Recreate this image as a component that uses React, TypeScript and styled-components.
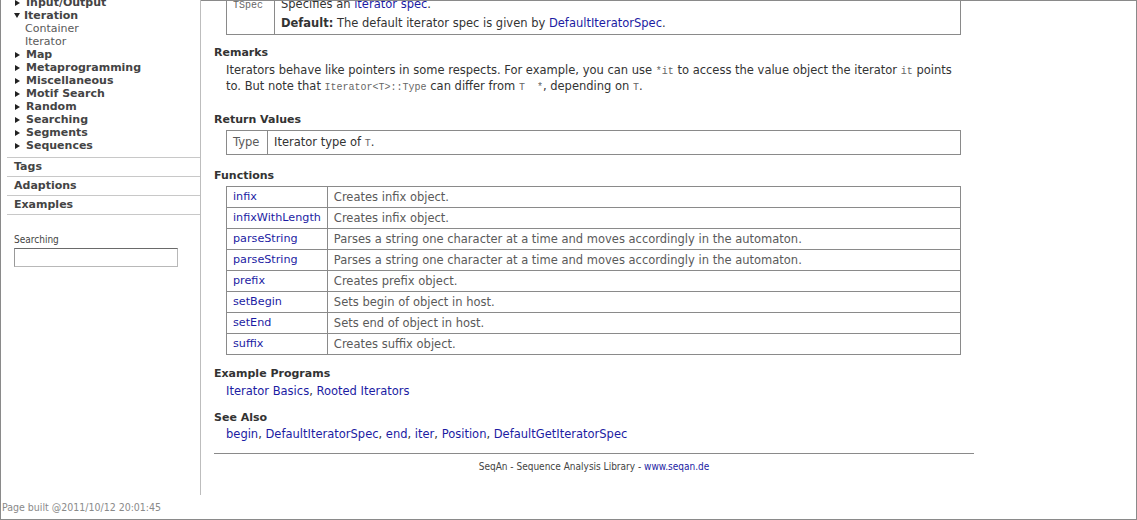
import React from "react";
import styled, { createGlobalStyle } from "styled-components";

const GlobalStyle = createGlobalStyle`
  html, body {
    margin: 0;
    padding: 0;
    background: #fff;
    overflow: hidden;
  }
  body {
    font-family: "DejaVu Sans", Verdana, sans-serif;
    font-size: 11px;
    color: #333;
  }
`;

const Frame = styled.div`
  width: 1137px;
  height: 520px;
  display: flex;
  box-sizing: border-box;
  border: 1px solid #8a8a8a;
  border-top: none;
  overflow: hidden;
`;

const LeftColumn = styled.div`
  width: 200px;
  flex: none;
  display: flex;
  flex-direction: column;
`;

const Sidebar = styled.aside`
  flex: 1;
  border-right: 1px solid #bdbdbd;
  overflow: hidden;
`;

const Tree = styled.ul`
  list-style: none;
  margin: -4px 0 0;
  padding: 0 0 5px 13px;
`;

const TreeItem = styled.li<{ $sub?: boolean }>`
  display: flex;
  align-items: center;
  height: 13px;
  line-height: 13px;
  padding-left: ${(p) => (p.$sub ? "11px" : "0")};
  font-weight: ${(p) => (p.$sub ? "normal" : "bold")};
  color: ${(p) => (p.$sub ? "#5a5a5a" : "#444")};
  white-space: nowrap;
`;

const Arrow = styled.span<{ $open?: boolean }>`
  display: inline-block;
  width: 0;
  height: 0;
  border-style: solid;
  border-color: transparent;
  ${(p) =>
    p.$open
      ? `border-width: 5px 3.5px 0 3.5px; border-top-color: #222; margin: 0 4px 0 0;`
      : `border-width: 3.5px 0 3.5px 5px; border-left-color: #222; margin: 0 6px 0 1px;`}
`;

const SideLink = styled.div`
  margin-left: 6px;
  border-top: 1px solid #c8c8c8;
  height: 18px;
  line-height: 18px;
  padding-left: 7px;
  font-weight: bold;
  color: #444;
`;

const SearchBox = styled.div`
  border-top: 1px solid #c8c8c8;
  margin-left: 6px;
  padding: 18px 0 0 7px;
`;

const SmallText = styled.div`
  font-family: "DejaVu Sans Condensed", "DejaVu Sans", sans-serif;
  font-size: 10px;
  line-height: 13px;
`;

const SearchLabel = styled(SmallText)`
  color: #444;
  margin-bottom: 2px;
`;

const SearchInput = styled.input`
  display: block;
  width: 164px;
  height: 19px;
  box-sizing: border-box;
  border: 1px solid #b8b8b8;
  border-top-color: #6a6a6a;
  border-left-color: #999;
  padding: 0 3px;
  font: inherit;
  background: #fff;
`;

const BuildInfo = styled(SmallText)`
  height: 24px;
  line-height: 24px;
  padding-left: 1px;
  font-size: 10.5px;
  color: #8a8a8a;
  white-space: nowrap;
`;

const Main = styled.main`
  flex: 1;
  border-top: 1px solid #8a8a8a;
  overflow: hidden;
`;

const Content = styled.div`
  width: 760px;
  margin-left: 13px;
  font-size: 11.5px;
`;

const Section = styled.section<{ $before?: number; $after?: number }>`
  margin-top: ${(p) => p.$before ?? 11}px;
  padding-bottom: ${(p) => p.$after ?? 0}px;
`;

const Heading = styled.h3`
  margin: 0 0 2px;
  font-size: 11px;
  line-height: 16px;
  font-weight: bold;
  color: #333;
`;

const Text = styled.p`
  margin: -1px 13px 0 12px;
  line-height: 16px;
  color: #333;
`;

const LinkLine = styled.p<{ $shift?: number }>`
  margin: ${(p) => p.$shift ?? -1}px 0 0 12px;
  line-height: 16px;
  color: #333;
`;

const Link = styled.a`
  color: #1c1ca3;
  text-decoration: none;
`;

const Code = styled.code`
  font-family: "Liberation Mono", "Courier New", monospace;
  font-size: 10px;
  line-height: 1;
  color: #666;
`;

const Table = styled.table<{ $top?: number }>`
  margin: ${(p) => p.$top ?? 0}px 0 0 12px;
  width: 735px;
  border-collapse: collapse;
  border: 1px solid #8a8a8a;
`;

const Cell = styled.td<{ $w?: number; $pad?: string; $muted?: boolean; $size?: number }>`
  border: 1px solid #8a8a8a;
  width: ${(p) => (p.$w ? `${p.$w}px` : "auto")};
  padding: ${(p) => p.$pad ?? "2px 6px"};
  font-size: ${(p) => (p.$size ? `${p.$size}px` : "inherit")};
  line-height: 16px;
  vertical-align: top;
  color: ${(p) => (p.$muted ? "#5a5a5a" : "#333")};
  white-space: nowrap;
`;

const CellPara = styled.div<{ $gap?: number }>`
  margin-top: ${(p) => p.$gap ?? 0}px;
`;

const Footer = styled.footer`
  margin-top: 11px;
  border-top: 1px solid #8a8a8a;
  padding-top: 6px;
  text-align: center;
  font-family: "DejaVu Sans Condensed", "DejaVu Sans", sans-serif;
  font-size: 10px;
  line-height: 13px;
  color: #444;
`;

const tree: { label: string; sub?: boolean; open?: boolean }[] = [
  { label: "Input/Output" },
  { label: "Iteration", open: true },
  { label: "Container", sub: true },
  { label: "Iterator", sub: true },
  { label: "Map" },
  { label: "Metaprogramming" },
  { label: "Miscellaneous" },
  { label: "Motif Search" },
  { label: "Random" },
  { label: "Searching" },
  { label: "Segments" },
  { label: "Sequences" },
];

const functions: [string, string][] = [
  ["infix", "Creates infix object."],
  ["infixWithLength", "Creates infix object."],
  ["parseString", "Parses a string one character at a time and moves accordingly in the automaton."],
  ["parseString", "Parses a string one character at a time and moves accordingly in the automaton."],
  ["prefix", "Creates prefix object."],
  ["setBegin", "Sets begin of object in host."],
  ["setEnd", "Sets end of object in host."],
  ["suffix", "Creates suffix object."],
];

const seeAlso = ["begin", "DefaultIteratorSpec", "end", "iter", "Position", "DefaultGetIteratorSpec"];

const App = () => {
  return (
    <>
      <GlobalStyle />
      <Frame>
        <LeftColumn>
          <Sidebar>
            <Tree>
              {tree.map((item, i) => (
                <TreeItem key={`tree-${i}`} $sub={item.sub}>
                  {!item.sub && <Arrow $open={item.open} />}
                  {item.label}
                </TreeItem>
              ))}
            </Tree>
            <SideLink>Tags</SideLink>
            <SideLink>Adaptions</SideLink>
            <SideLink>Examples</SideLink>
            <SearchBox>
              <SearchLabel>Searching</SearchLabel>
              <SearchInput type="text" />
            </SearchBox>
          </Sidebar>
          <BuildInfo>Page built @2011/10/12 20:01:45</BuildInfo>
        </LeftColumn>
        <Main>
          <Content>
            <Table $top={-10}>
              <tbody>
                <tr>
                  <Cell $w={35} $pad="4px 6px 3px" $muted>
                    <Code>TSpec</Code>
                  </Cell>
                  <Cell $pad="4px 6px 3px">
                    <CellPara>
                      Specifies an <Link href="#">iterator spec</Link>.
                    </CellPara>
                    <CellPara $gap={3}>
                      <b>Default:</b> The default iterator spec is given by{" "}
                      <Link href="#">DefaultIteratorSpec</Link>.
                    </CellPara>
                  </Cell>
                </tr>
              </tbody>
            </Table>

            <Section $before={10} $after={7}>
              <Heading>Remarks</Heading>
              <Text>
                Iterators behave like pointers in some respects. For example, you can use <Code>*it</Code> to
                access the value object the iterator <Code>it</Code> points to. But note that{" "}
                <Code>Iterator&lt;T&gt;::Type</Code> can differ from <Code>T&nbsp;&nbsp;*</Code>, depending on{" "}
                <Code>T</Code>.
              </Text>
            </Section>

            <Section $after={2}>
              <Heading>Return Values</Heading>
              <Table>
                <tbody>
                  <tr>
                    <Cell $w={28} $pad="3px 6px 4px" $muted>
                      Type
                    </Cell>
                    <Cell $pad="3px 6px 4px">
                      Iterator type of <Code>T</Code>.
                    </Cell>
                  </tr>
                </tbody>
              </Table>
            </Section>

            <Section>
              <Heading>Functions</Heading>
              <Table>
                <tbody>
                  {functions.map(([name, desc], i) => (
                    <tr key={`fn-${i}`}>
                      <Cell $w={87} $size={11.2}>
                        <Link href="#">{name}</Link>
                      </Cell>
                      <Cell $muted>{desc}</Cell>
                    </tr>
                  ))}
                </tbody>
              </Table>
            </Section>

            <Section>
              <Heading>Example Programs</Heading>
              <LinkLine>
                <Link href="#">Iterator Basics</Link>, <Link href="#">Rooted Iterators</Link>
              </LinkLine>
            </Section>

            <Section>
              <Heading>See Also</Heading>
              <LinkLine $shift={-2}>
                {seeAlso.map((name, i) => (
                  <React.Fragment key={`see-${name}`}>
                    {i > 0 && ", "}
                    <Link href="#">{name}</Link>
                  </React.Fragment>
                ))}
              </LinkLine>
            </Section>

            <Footer>
              SeqAn - Sequence Analysis Library - <Link href="#">www.seqan.de</Link>
            </Footer>
          </Content>
        </Main>
      </Frame>
    </>
  );
};

export default App;
